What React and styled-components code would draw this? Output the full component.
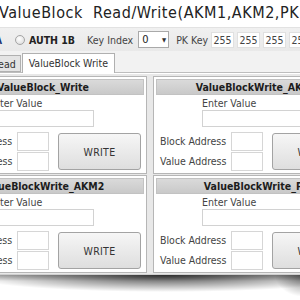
import React from 'react'
import styled, { createGlobalStyle } from 'styled-components'

const GlobalStyle = createGlobalStyle`
  html, body {
    margin: 0;
    padding: 0;
    background: #ffffff;
  }
  body {
    font-family: "DejaVu Sans Condensed", "Liberation Sans", sans-serif;
    color: #333;
  }
`;

const panels = [
  { title: 'ValueBlock_Write' },
  { title: 'ValueBlockWrite_AKM1' },
  { title: 'ValueBlockWrite_AKM2' },
  { title: 'ValueBlockWrite_PK' },
];

const ValuePanel = ({ title }) => (
  <Panel>
    <Header>{title}</Header>
    <EnterBlock>
      <EnterLabel>Enter Value</EnterLabel>
      <ValueInput />
    </EnterBlock>
    <AddressRow>
      <LabelCol>
        <AddrLabel>Block Address</AddrLabel>
        <AddrLabel>Value Address</AddrLabel>
      </LabelCol>
      <InputCol>
        <SmallInput />
        <SmallInput />
      </InputCol>
      <WriteButton>WRITE</WriteButton>
    </AddressRow>
  </Panel>
);

export default function App() {
  return (
    <Page>
      <GlobalStyle />
      <Window>
        <TitleBar>{'ValueBlock  Read/Write(AKM1,AKM2,PK Key)'}</TitleBar>
        <Toolbar>
          <FirstRadioText>AUTH 1A</FirstRadioText>
          <Radio />
          <BoldLabel>AUTH 1B</BoldLabel>
          <ToolLabel $gap={12}>Key Index</ToolLabel>
          <Select>
            <span>0</span>
            <Arrow>▼</Arrow>
          </Select>
          <ToolLabel $gap={7}>PK Key</ToolLabel>
          <KeyBoxes>
            {[255, 255, 255, 255, 255, 255].map((v, i) => (
              <KeyBox key={i}>{v}</KeyBox>
            ))}
          </KeyBoxes>
        </Toolbar>
        <TabStrip>
          <Tab>Read</Tab>
          <Tab $active>ValueBlock Write</Tab>
        </TabStrip>
        <Content>
          <PanelGrid>
            {panels.map((p) => (
              <ValuePanel key={p.title} title={p.title} />
            ))}
          </PanelGrid>
        </Content>
      </Window>
      <Shadow />
    </Page>
  )
}

const Page = styled.div`
  width: 300px;
  height: 300px;
  overflow: hidden;
  background: #fff;
`;

const Window = styled.div`
  margin-left: -64px;
  width: 440px;
`;

const TitleBar = styled.div`
  height: 27px;
  box-sizing: border-box;
  padding: 3px 0 0 63px;
  font-size: 16px;
  letter-spacing: 0.55px;
  line-height: 20px;
  color: #222;
  white-space: pre;
  background: #fff;
`;

const Toolbar = styled.div`
  height: 23px;
  display: flex;
  align-items: center;
  padding-left: 6px;
  background: linear-gradient(#f0f0f0, #e9e9e9);
  border-top: 1px solid #e2e2e2;
  font-size: 10.5px;
  white-space: nowrap;
`;

const FirstRadioText = styled.div`
  width: 60px;
  text-align: right;
  font-weight: bold;
  color: #1d3570;
`;

const Radio = styled.div`
  width: 8px;
  height: 8px;
  margin-left: 13px;
  border-radius: 50%;
  border: 1px solid #a4a4a4;
  background: radial-gradient(circle at 40% 35%, #ffffff, #d6d6d6);
`;

const BoldLabel = styled.div`
  margin-left: 4px;
  font-weight: bold;
  color: #222;
`;

const ToolLabel = styled.div`
  margin-left: ${(p) => p.$gap}px;
  color: #444;
`;

const Select = styled.div`
  margin-left: 5px;
  width: 31px;
  height: 17px;
  box-sizing: border-box;
  border: 1px solid #a9a9a9;
  background: #fff;
  display: flex;
  align-items: center;
  justify-content: space-between;
  padding: 0 2px 0 3px;
  font-size: 11px;
  color: #222;
`;

const Arrow = styled.span`
  font-size: 6px;
  color: #333;
`;

const KeyBoxes = styled.div`
  display: flex;
  gap: 3px;
  margin-left: 3px;
`;

const KeyBox = styled.div`
  width: 23px;
  height: 16px;
  box-sizing: border-box;
  border: 1px solid #e0e0e0;
  background: #fff;
  text-align: center;
  line-height: 14px;
  color: #444;
`;

const TabStrip = styled.div`
  height: 21px;
  display: flex;
  align-items: flex-end;
  padding-left: 51px;
  background: #f2f2f2;
  border-bottom: 1px solid #bdbdbd;
  font-size: 10.5px;
`;

const Tab = styled.div`
  box-sizing: border-box;
  height: ${(p) => (p.$active ? '20px' : '17px')};
  margin-bottom: ${(p) => (p.$active ? '-1px' : '0')};
  margin-left: ${(p) => (p.$active ? '1px' : '0')};
  padding: 0 ${(p) => (p.$active ? '6px' : '4px')};
  line-height: ${(p) => (p.$active ? '18px' : '16px')};
  border: 1px solid #b0b0b0;
  border-bottom: ${(p) => (p.$active ? 'none' : '1px solid #b0b0b0')};
  background: ${(p) => (p.$active ? '#fff' : '#e4e4e4')};
  color: #333;
  white-space: nowrap;
`;

const Content = styled.div`
  background: #e8e8e8;
  padding: 2px 0 1px 3px;
  border-top: 1px solid #fff;
  border-bottom: 1px solid #cfcfcf;
`;

const PanelGrid = styled.div`
  display: grid;
  grid-template-columns: 208px 208px;
  column-gap: 6px;
  row-gap: 1px;
`;

const Panel = styled.div`
  box-sizing: border-box;
  background: #fff;
  border: 1px solid #b6b6b6;
  padding: 2px 2px 2px;
`;

const Header = styled.div`
  height: 16px;
  box-sizing: border-box;
  border: 1px solid #c2c2c2;
  background: linear-gradient(#dadada, #c9c9c9);
  text-align: center;
  font-size: 10.5px;
  font-weight: bold;
  line-height: 14px;
  color: #1c1c1c;
  white-space: nowrap;
  overflow: hidden;
`;

const EnterBlock = styled.div`
  width: 106px;
  margin: 2px 0 0 46px;
`;

const EnterLabel = styled.div`
  font-size: 10.5px;
  line-height: 13px;
  color: #444;
`;

const ValueInput = styled.div`
  height: 17px;
  box-sizing: border-box;
  border: 1px solid #d2d2d2;
  background: #fff;
`;

const AddressRow = styled.div`
  display: flex;
  align-items: flex-start;
  margin-top: 5px;
  padding-left: 4px;
`;

const LabelCol = styled.div`
  width: 71px;
  display: flex;
  flex-direction: column;
  gap: 1px;
`;

const AddrLabel = styled.div`
  height: 19px;
  line-height: 19px;
  font-size: 10.5px;
  color: #444;
  white-space: nowrap;
`;

const InputCol = styled.div`
  display: flex;
  flex-direction: column;
  gap: 1px;
`;

const SmallInput = styled.div`
  width: 32px;
  height: 19px;
  box-sizing: border-box;
  border: 1px solid #d6d6d6;
  background: #fff;
`;

const WriteButton = styled.div`
  margin: 1px 0 0 9px;
  width: 83px;
  height: 37px;
  box-sizing: border-box;
  border: 1px solid #a3a3a3;
  border-radius: 3px;
  background: linear-gradient(#f6f6f6, #dedede);
  display: flex;
  align-items: center;
  justify-content: center;
  font-size: 10.5px;
  letter-spacing: 0.3px;
  color: #333;
`;

const Shadow = styled.div`
  height: 26px;
  background:
    radial-gradient(ellipse 200px 17px at 165px 0, rgba(0, 0, 0, 0.75), rgba(0, 0, 0, 0) 100%),
    radial-gradient(ellipse 30px 22px at 305px 0, rgba(0, 0, 0, 0.5), rgba(0, 0, 0, 0) 100%),
    linear-gradient(rgba(0, 0, 0, 0.3), rgba(0, 0, 0, 0) 6px);
`;
